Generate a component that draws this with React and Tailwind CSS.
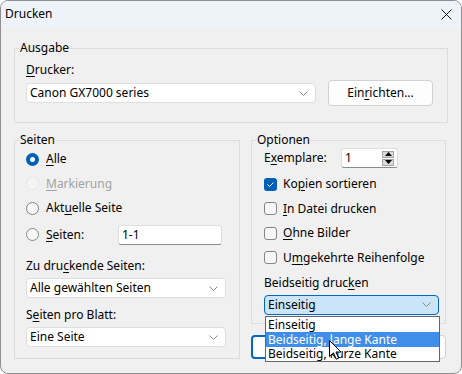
import React from "react";

const U = ({ children }) => <span className="underline decoration-1 underline-offset-[2px]">{children}</span>;

function Chevron() {
  return (
    <svg width="9" height="5" viewBox="0 0 9 5" className="shrink-0">
      <path d="M0.5 0.5 L4.5 4.5 L8.5 0.5" stroke="#8a8a8a" fill="none" strokeWidth="1" />
    </svg>
  );
}

function Select({ children, className = "", focused = false }) {
  return (
    <div
      className={`flex items-center justify-between h-[20px] rounded-[4px] border pl-[3px] pr-[7px] ${
        focused ? "bg-[#cce4f7] border-[#0067c0]" : "bg-white border-[#dedede]"
      } ${className}`}
    >
      <span className="leading-[16px]">{children}</span>
      <Chevron />
    </div>
  );
}

function Group({ label, className = "", children }) {
  return (
    <fieldset className={`border border-[#dcdcdc] p-0 m-0 ${className}`}>
      <legend className="ml-[4px] px-[1px] leading-[16px] h-[16px]">{label}</legend>
      {children}
    </fieldset>
  );
}

function Radio({ state }) {
  if (state === "on")
    return (
      <div className="w-[13px] h-[13px] rounded-full bg-[#005fb8] flex items-center justify-center shrink-0">
        <div className="w-[5px] h-[5px] rounded-full bg-white" />
      </div>
    );
  if (state === "disabled")
    return <div className="w-[13px] h-[13px] rounded-full border border-[#e6e6e6] bg-[#f5f5f5] shrink-0" />;
  return <div className="w-[13px] h-[13px] rounded-full border border-[#858585] bg-[#f7f7f7] shrink-0" />;
}

function Check({ on }) {
  if (on)
    return (
      <div className="w-[13px] h-[13px] rounded-[3px] bg-[#005fb8] flex items-center justify-center shrink-0">
        <svg width="9" height="7" viewBox="0 0 9 7">
          <path d="M1.5 3.5 L3.5 5.5 L7.5 1.5" stroke="white" fill="none" strokeWidth="1" />
        </svg>
      </div>
    );
  return <div className="w-[13px] h-[13px] rounded-[3px] border border-[#858585] bg-[#f7f7f7] shrink-0" />;
}

export default function App() {
  return (
    <div className="w-[462px] h-[374px] bg-white">
      <div
        className="relative w-[462px] h-[374px] rounded-[8px] border border-[#8f8f8f] bg-[#f0f0f0] overflow-hidden text-[12px] text-black leading-[16px]"
        style={{ fontFamily: '"Segoe UI", "Noto Sans", sans-serif' }}
      >
        {/* title bar */}
        <div className="h-[26px] bg-[#eef3f9] flex items-center justify-between pl-[4px] pr-[9px]">
          <span>Drucken</span>
          <svg width="11" height="11" viewBox="0 0 11 11">
            <path d="M0.5 0.5 L10.5 10.5 M10.5 0.5 L0.5 10.5" stroke="#1b1b1b" strokeWidth="1" />
          </svg>
        </div>

        <div className="pt-[13px] px-[13px]">
          {/* Ausgabe */}
          <Group label="Ausgabe" className="w-[434px]">
            <div className="pl-[11px] pr-[13px] pt-[6px] pb-[16px]">
              <div>
                <U>D</U>rucker:
              </div>
              <div className="mt-[2px] flex items-center gap-[12px]">
                <Select className="w-[290px]">Canon GX7000 series</Select>
                <div className="w-[105px] h-[26px] rounded-[4px] border border-[#d0d0d0] bg-[#fdfdfd] flex items-center justify-center">
                  <span>
                    Ein<U>r</U>ichten...
                  </span>
                </div>
              </div>
            </div>
          </Group>

          <div className="mt-[9px] flex items-start gap-[11px]">
            {/* Seiten */}
            <Group label="Seiten" className="w-[226px]">
              <div className="pl-[11px] pr-[12px] pt-[1px] pb-[11px]">
                <div className="flex flex-col gap-[4.5px]">
                  <div className="h-[20px] flex items-center gap-[7px]">
                    <Radio state="on" />
                    <span>
                      <U>A</U>lle
                    </span>
                  </div>
                  <div className="h-[20px] flex items-center gap-[7px] text-[#a3a3a3]">
                    <Radio state="disabled" />
                    <span>
                      <U>M</U>arkierung
                    </span>
                  </div>
                  <div className="h-[20px] flex items-center gap-[7px]">
                    <Radio state="off" />
                    <span>
                      Akt<U>u</U>elle Seite
                    </span>
                  </div>
                  <div className="mt-[2px] h-[20px] flex items-center">
                    <div className="w-[92px] flex items-center gap-[7px]">
                      <Radio state="off" />
                      <span>
                        <U>S</U>eiten:
                      </span>
                    </div>
                    <div className="w-[104px] h-[20px] bg-white border border-[#dedede] border-b-[#8a8a8a] rounded-[3px] pl-[3px] flex items-center">
                      1-1
                    </div>
                  </div>
                </div>
                <div className="mt-[13.5px]">
                  Zu dru<U>c</U>kende Seiten:
                </div>
                <Select className="mt-[4px] w-[200px]">Alle gewählten Seiten</Select>
                <div className="mt-[9px]">
                  S<U>e</U>iten pro Blatt:
                </div>
                <Select className="mt-[4px] w-[200px]">Eine Seite</Select>
              </div>
            </Group>

            {/* right column */}
            <div className="w-[195px]">
              <Group label="Optionen" className="w-[195px]">
                <div className="pl-[12px] pt-[0px] pb-[8px]">
                  <div className="h-[20px] flex items-center">
                    <div className="w-[77px]">
                      E<U>x</U>emplare:
                    </div>
                    <div className="w-[57px] h-[20px] bg-white border border-[#dedede] border-b-[#8a8a8a] rounded-[3px] pl-[3px] pr-[3px] flex items-center justify-between">
                      <span>1</span>
                      <div className="flex flex-col gap-[1px]">
                        <div className="w-[12px] h-[7px] bg-[#d9d9d9] border border-[#a6a6a6] flex items-center justify-center">
                          <svg width="7" height="4" viewBox="0 0 7 4">
                            <path d="M0 4 L3.5 0 L7 4 Z" fill="#000" />
                          </svg>
                        </div>
                        <div className="w-[12px] h-[7px] bg-[#d9d9d9] border border-[#a6a6a6] flex items-center justify-center">
                          <svg width="7" height="4" viewBox="0 0 7 4">
                            <path d="M0 0 L3.5 4 L7 0 Z" fill="#000" />
                          </svg>
                        </div>
                      </div>
                    </div>
                  </div>
                  <div className="mt-[6px] flex flex-col gap-[4.5px]">
                    <div className="h-[20px] flex items-center gap-[6px]">
                      <Check on />
                      <span>
                        Ko<U>p</U>ien sortieren
                      </span>
                    </div>
                    <div className="h-[20px] flex items-center gap-[6px]">
                      <Check />
                      <span>
                        <U>I</U>n Datei drucken
                      </span>
                    </div>
                    <div className="h-[20px] flex items-center gap-[6px]">
                      <Check />
                      <span>
                        <U>O</U>hne Bilder
                      </span>
                    </div>
                    <div className="h-[20px] flex items-center gap-[6px]">
                      <Check />
                      <span>
                        U<U>m</U>gekehrte Reihenfolge
                      </span>
                    </div>
                  </div>
                  <div className="mt-[7px]">
                    Beidseitig druc<U>k</U>en
                  </div>
                  <Select focused className="mt-[4px] w-[175px]">
                    Einseitig
                  </Select>
                </div>
              </Group>
              {/* OK / Abbrechen buttons, hidden behind the open list */}
              <div className="mt-[11px] flex gap-[7px]">
                <div className="w-[93px] h-[24px] rounded-[4px] border-2 border-[#0067c0] bg-[#fdfdfd]" />
                <div className="w-[95px] h-[24px] rounded-[4px] border border-[#d0d0d0] bg-[#fdfdfd]" />
              </div>
            </div>
          </div>
        </div>

        {/* open dropdown list */}
        <div className="absolute left-[264px] top-[315px] w-[175px] h-[46px] bg-white border border-[#666666] flex flex-col">
          <div className="h-[15px] pl-[2px] leading-[15px]">Einseitig</div>
          <div className="h-[15px] pl-[2px] leading-[15px] bg-[#3f8fea] text-white">Beidseitig, lange Kante</div>
          <div className="h-[14px] pl-[2px] leading-[14px]">Beidseitig, kurze Kante</div>
        </div>

        {/* mouse cursor */}
        <svg className="absolute left-[328px] top-[339px]" width="13" height="21" viewBox="0 0 13 21">
          <path
            d="M0.5 0.5 L0.5 16.5 L4.5 12.8 L7.2 19.2 L9.6 18.2 L7 12 L12 12 Z"
            fill="#ffffff"
            stroke="#000000"
            strokeWidth="1"
            strokeLinejoin="round"
          />
        </svg>
      </div>
    </div>
  );
}
